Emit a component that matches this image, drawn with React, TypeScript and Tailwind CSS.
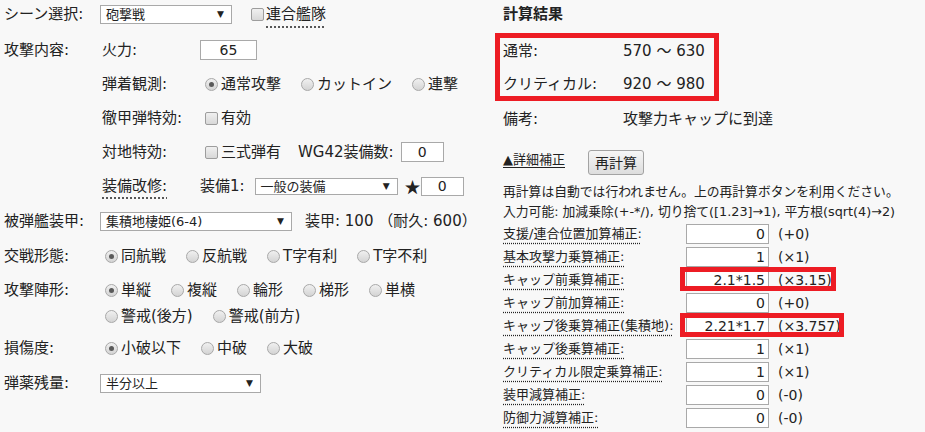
import { ReactNode } from "react";

const Radio = ({ checked }: { checked?: boolean }) => (
  <span className="inline-flex h-[13px] w-[13px] shrink-0 items-center justify-center rounded-full border border-[#a8a8a8] bg-gradient-to-b from-[#f0f0f0] to-[#d4d4d4]">
    {checked && <span className="h-[5px] w-[5px] rounded-full bg-[#5a5a5a]" />}
  </span>
);

const Check = () => (
  <span className="inline-block h-[13px] w-[13px] shrink-0 rounded-[2px] border border-[#9d9d9d] bg-gradient-to-b from-[#f0f0f0] to-[#d8d8d8]" />
);

const RadioItem = ({ label, checked }: { label: string; checked?: boolean }) => (
  <span className="mr-[15px] flex items-center gap-[3px]">
    <span className="ml-[5px] flex">
      <Radio checked={checked} />
    </span>
    <span>{label}</span>
  </span>
);

const Select = ({ value, className }: { value: string; className: string }) => (
  <div
    className={`flex items-center justify-between border border-[#a9a9a9] bg-white pl-[5px] pr-[7px] text-[13px] leading-none ${className}`}
  >
    <span>{value}</span>
    <span className="text-[9px]">▼</span>
  </div>
);

const Box = ({ value, className }: { value: string; className: string }) => (
  <div className={`flex items-center justify-center border border-[#a9a9a9] bg-white text-[14px] ${className}`}>
    {value}
  </div>
);

const Row = ({ label, children, h }: { label: string; children: ReactNode; h: string }) => (
  <div className={`flex items-center ${h}`}>
    <div className="w-[96px] shrink-0">{label}</div>
    {children}
  </div>
);

const SubRow = ({ label, children }: { label: ReactNode; children: ReactNode }) => (
  <div className="flex h-[34px] items-center">
    <div className="w-[100px] shrink-0 pl-[2px]">{label}</div>
    {children}
  </div>
);

const corrections = [
  { label: "支援/連合位置加算補正:", value: "0", result: "(+0)", mark: "" },
  { label: "基本攻撃力乗算補正:", value: "1", result: "(×1)", mark: "" },
  { label: "キャップ前乗算補正:", value: "2.1*1.5", result: "(×3.15)", mark: "w-[156px]" },
  { label: "キャップ前加算補正:", value: "0", result: "(+0)", mark: "" },
  { label: "キャップ後乗算補正(集積地):", value: "2.21*1.7", result: "(×3.757)", mark: "w-[164px]" },
  { label: "キャップ後乗算補正:", value: "1", result: "(×1)", mark: "" },
  { label: "クリティカル限定乗算補正:", value: "1", result: "(×1)", mark: "" },
  { label: "装甲減算補正:", value: "0", result: "(-0)", mark: "" },
  { label: "防御力減算補正:", value: "0", result: "(-0)", mark: "" },
];

export default function App() {
  return (
    <div className="flex h-[432px] w-[925px] overflow-hidden bg-[#f8f8f8] font-['DejaVu_Sans','Noto_Sans_CJK_JP',sans-serif] text-[15px] leading-[20px] text-[#222]">
      {/* left: input form */}
      <div className="w-[503px] shrink-0 pl-[4px]">
        <Row label="シーン選択:" h="h-[28px]">
          <Select value="砲撃戦" className="h-[19px] w-[132px]" />
          <span className="ml-[19px] flex">
            <Check />
          </span>
          <span className="ml-[2px] underline decoration-dotted underline-offset-[8px]">連合艦隊</span>
        </Row>

        <div className="mt-[5px] flex">
          <div className="flex h-[34px] w-[96px] shrink-0 items-center">攻撃内容:</div>
          <div className="flex flex-col">
            <SubRow label="火力:">
              <Box value="65" className="h-[20px] w-[57px]" />
            </SubRow>
            <SubRow label="弾着観測:">
              <RadioItem label="通常攻撃" checked />
              <RadioItem label="カットイン" />
              <RadioItem label="連撃" />
            </SubRow>
            <SubRow label="徹甲弾特効:">
              <span className="ml-[5px] flex">
                <Check />
              </span>
              <span className="ml-[3px]">有効</span>
            </SubRow>
            <SubRow label="対地特効:">
              <span className="ml-[5px] flex">
                <Check />
              </span>
              <span className="ml-[3px]">三式弾有</span>
              <span className="ml-[17px]">WG42装備数:</span>
              <Box value="0" className="ml-[7px] h-[20px] w-[43px]" />
            </SubRow>
            <SubRow label={<span className="underline decoration-dotted underline-offset-[7px]">装備改修:</span>}>
              <span>装備1:</span>
              <Select value="一般の装備" className="ml-[10px] h-[17px] w-[143px]" />
              <span className="ml-[7px] font-['Noto_Sans_CJK_JP',sans-serif] text-[16px] leading-none">★</span>
              <Box value="0" className="ml-[0px] h-[19px] w-[43px]" />
            </SubRow>
          </div>
        </div>

        <Row label="被弾艦装甲:" h="h-[36px]">
          <Select value="集積地棲姫(6-4)" className="h-[19px] w-[192px]" />
          <span className="ml-[13px]">装甲: 100 （耐久: 600）</span>
        </Row>

        <Row label="交戦形態:" h="h-[34px]">
          <RadioItem label="同航戦" checked />
          <RadioItem label="反航戦" />
          <RadioItem label="T字有利" />
          <RadioItem label="T字不利" />
        </Row>

        <div className="flex pt-[4px] pb-[2px]">
          <div className="flex h-[26px] w-[96px] shrink-0 items-center">攻撃陣形:</div>
          <div className="flex w-[340px] flex-wrap">
            {[
              ["単縦", true],
              ["複縦", false],
              ["輪形", false],
              ["梯形", false],
              ["単横", false],
              ["警戒(後方)", false],
              ["警戒(前方)", false],
            ].map(([label, checked]) => (
              <div key={label as string} className="flex h-[26px] items-center">
                <RadioItem label={label as string} checked={checked as boolean} />
              </div>
            ))}
          </div>
        </div>

        <Row label="損傷度:" h="h-[34px]">
          <RadioItem label="小破以下" checked />
          <RadioItem label="中破" />
          <RadioItem label="大破" />
        </Row>

        <Row label="弾薬残量:" h="h-[36px]">
          <Select value="半分以上" className="h-[19px] w-[161px]" />
        </Row>
      </div>

      {/* right: results */}
      <div className="flex-1">
        <div className="flex h-[28px] items-center font-bold">計算結果</div>

        <div className="-ml-[8px] mt-[5px] flex w-[224px] flex-col gap-[11px] border-[5px] border-[#ed1c24] pt-[2px] pb-[1px] pl-[3px]">
          <div className="flex h-[22px] items-center">
            <span className="w-[120px]">通常:</span>
            <span>570 ～ 630</span>
          </div>
          <div className="flex h-[22px] items-center">
            <span className="w-[120px]">クリティカル:</span>
            <span>920 ～ 980</span>
          </div>
        </div>

        <div className="flex h-[36px] items-center">
          <span className="w-[120px]">備考:</span>
          <span>攻撃力キャップに到達</span>
        </div>

        <div className="mt-[13px] flex h-[25px] items-center text-[13px]">
          <span className="-mt-[6px] underline underline-offset-[3px]">▲詳細補正</span>
          <button className="ml-[23px] h-[25px] w-[56px] rounded-[3px] border border-[#a3a3a3] bg-gradient-to-b from-[#f6f6f6] to-[#dddddd] text-[14px]">
            再計算
          </button>
        </div>

        <div className="mt-[7px] text-[12.8px]">
          <div className="h-[20px] whitespace-nowrap leading-[20px]">再計算は自動では行われません。上の再計算ボタンを利用ください。</div>
          <div className="h-[20px] whitespace-nowrap leading-[20px]">入力可能: 加減乗除(+-*/), 切り捨て([1.23]→1), 平方根(sqrt(4)→2)</div>
        </div>

        <div className="mt-[2px] flex flex-col text-[13px]">
          {corrections.map((c) => (
            <div key={c.label} className="flex h-[23px] items-start">
              <div className="w-[183px] shrink-0">
                <span className="leading-[20px] underline decoration-dotted underline-offset-[5px]">{c.label}</span>
              </div>
              <div className="relative flex items-start">
                <div className="flex h-[20px] w-[83px] items-center justify-end border border-[#a9a9a9] bg-white pr-[3px] text-[14px]">
                  {c.value}
                </div>
                <span className="ml-[9px] text-[14px] leading-[20px]">{c.result}</span>
                {c.mark && (
                  <span
                    className={`pointer-events-none absolute -left-[6px] -top-[3px] h-[24px] border-[5px] border-[#ed1c24] ${c.mark}`}
                  />
                )}
              </div>
            </div>
          ))}
        </div>
      </div>
    </div>
  );
}
